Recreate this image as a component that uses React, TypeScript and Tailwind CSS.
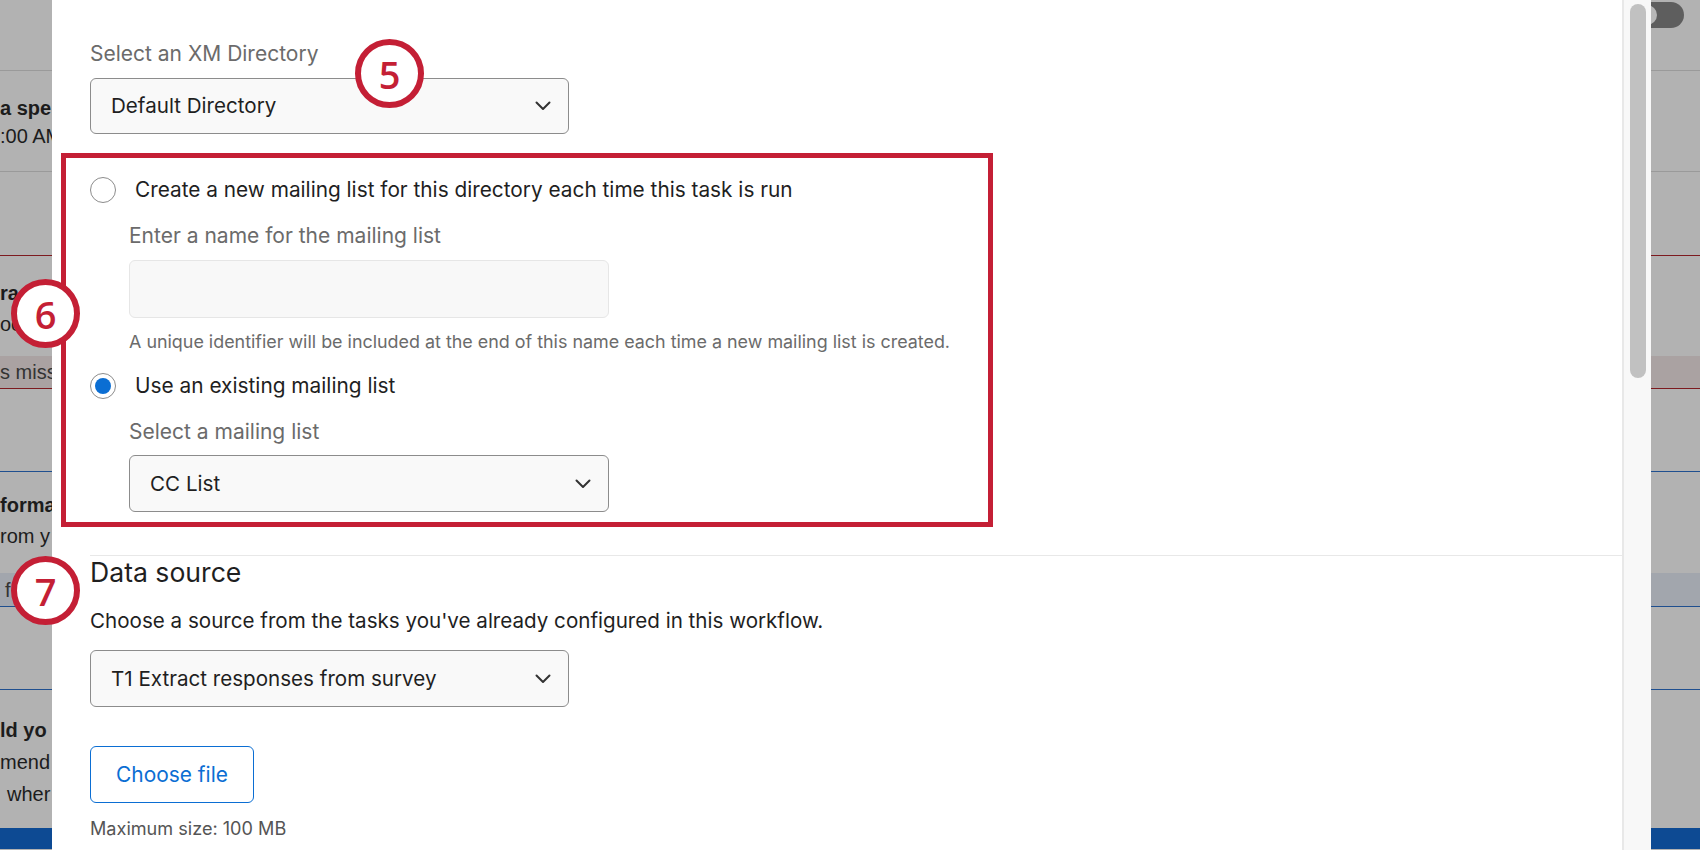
import React from "react";

const Chevron = () => (
  <svg width="16" height="10" viewBox="0 0 16 10" fill="none">
    <polyline points="1.5,1.5 8,8 14.5,1.5" stroke="#333" strokeWidth="2" strokeLinecap="round" strokeLinejoin="round" />
  </svg>
);

const Select = ({ text, w, h }: { text: string; w: string; h: string }) => (
  <div className={`${w} ${h} flex items-center justify-between rounded-[6px] border border-[#8c8c8c] bg-[#f9f9f9] pl-[20px] pr-[17px]`}>
    <span className="text-[20.6px] leading-[26px] text-[#1f1f1f]">{text}</span>
    <Chevron />
  </div>
);

const Badge = ({ n, cls }: { n: string; cls: string }) => (
  <div className={`absolute ${cls} w-[69px] h-[69px] rounded-full border-[6px] border-[#c41f35] bg-white flex items-center justify-center`}>
    <span className="text-[38px] font-semibold leading-none text-[#c41f35]" style={{ fontFamily: '"Open Sans", sans-serif' }}>{n}</span>
  </div>
);

export default function App() {
  return (
    <div className="relative w-[1700px] h-[850px] overflow-hidden bg-[#b2b2b2]" style={{ fontFamily: "Inter, sans-serif" }}>
      {/* background page (dimmed) */}
      <div className="flex flex-col w-full text-[20px] text-[#1c1c1c]" style={{ fontFamily: '"Liberation Sans", Arial, sans-serif' }}>
        <div className="relative h-[71px] border-b border-[#9a9a9a]">
          <div className="absolute left-[1634px] top-[2px] w-[50px] h-[26px] rounded-full bg-[#5e5e5e] flex items-center pl-[3px]">
            <div className="w-[20px] h-[20px] rounded-full bg-[#b7b7b7]" />
          </div>
        </div>
        <div className="h-[101px] border-b border-[#9a9a9a] flex flex-col pt-[23px] leading-[28px] whitespace-nowrap">
          <span className="font-bold">a spe</span>
          <span>:00 AM</span>
        </div>
        <div className="h-[84px] border-b border-[#7d1a1f]" />
        <div className="flex flex-col border-b border-[#7d1a1f] whitespace-nowrap">
          <div className="h-[100px] flex flex-col pt-[22px] leading-[31px]">
            <span className="font-bold">ra</span>
            <span>oo</span>
          </div>
          <div className="h-[32px] bg-[#aaa2a2] flex items-center text-[#333]">s missi</div>
        </div>
        <div className="h-[83px] border-b border-[#1f4f8f]" />
        <div className="flex flex-col border-b border-[#1f4f8f] whitespace-nowrap">
          <div className="h-[101px] flex flex-col pt-[18px] leading-[31px]">
            <span className="font-bold">forma</span>
            <span>rom y</span>
          </div>
          <div className="h-[33px] bg-[#a2a6ad] flex items-center pl-[5px] text-[#333]">f</div>
        </div>
        <div className="h-[83px] border-b border-[#1f4f8f]" />
        <div className="h-[138px] flex flex-col pt-[24px] leading-[32px] whitespace-nowrap">
          <span className="font-bold">ld yo</span>
          <span>mend</span>
          <span className="pl-[7px]">wher</span>
        </div>
        <div className="h-[21px] bg-[#0d4a93]" />
      </div>

      {/* modal */}
      <div className="absolute left-[52px] top-0 w-[1599px] h-[850px] bg-white flex">
        <div className="flex-1 flex flex-col pt-[41px]">
          <div className="pl-[38px] flex flex-col">
            <div className="text-[21px] leading-[26px] text-[#6b6b6b]">Select an XM Directory</div>
            <div className="mt-[11px]">
              <Select text="Default Directory" w="w-[479px]" h="h-[56px]" />
            </div>

            <div className="mt-[19px] -ml-[29px] w-[932px] border-[5px] border-[#c41f35] pl-[24px] pt-[19px] pb-[10px] flex flex-col">
              <div className="flex items-center h-[26px]">
                <div className="w-[26px] h-[26px] rounded-full border border-[#8c8c8c] bg-white" />
                <span className="ml-[19px] text-[20.8px] text-[#1f1f1f]">Create a new mailing list for this directory each time this task is run</span>
              </div>
              <div className="pl-[39px] flex flex-col">
                <div className="mt-[20px] text-[21px] leading-[26px] text-[#6b6b6b]">Enter a name for the mailing list</div>
                <div className="mt-[11px] w-[480px] h-[58px] rounded-[6px] border border-[#e6e6e6] bg-[#f8f8f8]" />
                <div className="mt-[13px] text-[17.9px] leading-[22px] text-[#6b6b6b]">A unique identifier will be included at the end of this name each time a new mailing list is created.</div>
              </div>
              <div className="mt-[20px] flex items-center h-[26px]">
                <div className="w-[26px] h-[26px] rounded-full border border-[#8c8c8c] bg-white flex items-center justify-center">
                  <div className="w-[16px] h-[16px] rounded-full bg-[#0b6ed3]" />
                </div>
                <span className="ml-[19px] text-[20.85px] text-[#1f1f1f]">Use an existing mailing list</span>
              </div>
              <div className="pl-[39px] flex flex-col">
                <div className="mt-[20px] text-[21px] leading-[26px] text-[#6b6b6b]">Select a mailing list</div>
                <div className="mt-[10px]">
                  <Select text="CC List" w="w-[480px]" h="h-[57px]" />
                </div>
              </div>
            </div>
          </div>

          <div className="mt-[28px] ml-[38px] h-px bg-[#e8e8e8]" />

          <div className="pl-[38px] flex flex-col">
            <div className="text-[26.6px] leading-[32px] text-[#1f1f1f]">Data source</div>
            <div className="mt-[20px] text-[20.6px] leading-[26px] text-[#1f1f1f]">Choose a source from the tasks you've already configured in this workflow.</div>
            <div className="mt-[16px]">
              <Select text="T1 Extract responses from survey" w="w-[479px]" h="h-[57px]" />
            </div>
            <div className="mt-[39px] w-[164px] h-[57px] rounded-[6px] border border-[#0b6ed3] flex items-center justify-center text-[20.9px] text-[#0b6ed3]">Choose file</div>
            <div className="mt-[13px] text-[18.1px] leading-[24px] text-[#555]">Maximum size: 100 MB</div>
          </div>
        </div>
        {/* scrollbar */}
        <div className="w-[29px] h-full border-l-2 border-[#e8e8e8] bg-[#f8f8f8] pt-[4px] pl-[6px]">
          <div className="w-[16px] h-[374px] rounded-full bg-[#c1c1c1]" />
        </div>
      </div>

      <Badge n="5" cls="left-[355px] top-[39px]" />
      <Badge n="6" cls="left-[11px] top-[279px]" />
      <Badge n="7" cls="left-[11px] top-[556px]" />
    </div>
  );
}
